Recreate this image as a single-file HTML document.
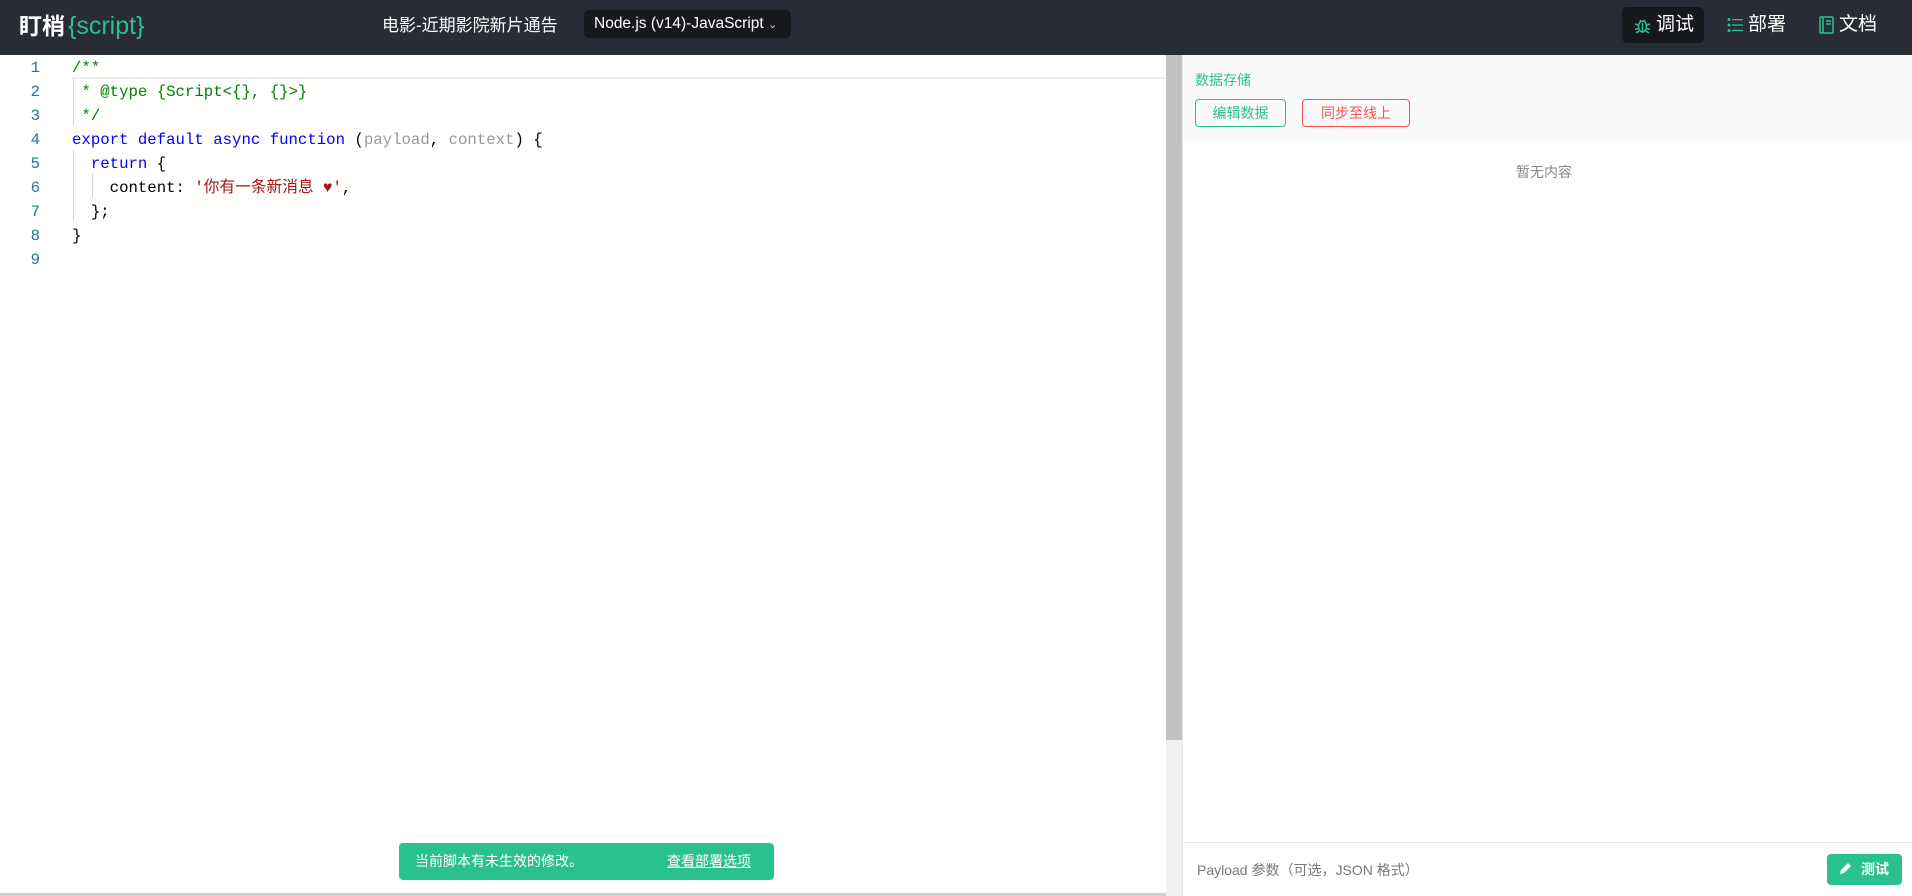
<!DOCTYPE html>
<html><head><meta charset="utf-8"><style>
*{margin:0;padding:0;box-sizing:border-box}
body{width:1912px;height:896px;overflow:hidden;background:#fff;font-family:"Liberation Sans","Noto Sans CJK SC",sans-serif;position:relative}
.hd{position:absolute;left:0;top:0;width:1912px;height:55px;background:#282c34;color:#fff}
.abs{position:absolute;line-height:1.2}
.code{position:absolute;left:0;top:55px;width:1166px;height:838px;background:#fffffe;font-family:"Liberation Mono","Noto Sans CJK SC",monospace;font-size:15.7px}
.ln{position:absolute;left:0;width:40px;text-align:right;color:#237893;line-height:20px;height:20px}
.cl{position:absolute;left:72px;white-space:pre;color:#000;line-height:20px;height:20px}
.g{color:#008000}.k{color:#0000ff}.p{color:#999}.s{color:#a31515}
.btn{position:absolute;border:1px solid;border-radius:4px;font-size:14px;display:flex;align-items:center;justify-content:center}
</style></head><body>
<div class="hd">
 <div class="abs" style="left:19px;top:13px;font-size:23px;font-weight:bold;color:#fff">盯梢</div>
 <div class="abs" style="left:68px;top:11px;font-size:25px;color:#2bc18e">{script}</div>
 <div class="abs" style="left:382px;top:16px;font-size:17px">电影-近期影院新片通告</div>
 <div class="abs" style="left:584px;top:10px;width:207px;height:28px;background:#16181c;border-radius:5px;font-size:15.5px;padding:5px 0 0 10px">Node.js (v14)-JavaScript <span style="font-size:11px;color:#ccc">&#8964;</span></div>
 <div class="abs" style="left:1622px;top:7px;width:82px;height:36px;background:#16181c;border-radius:5px"></div>
 <svg class="abs" style="left:1634px;top:16px" width="17" height="18" viewBox="0 0 17 18" fill="none" stroke="#2bc18e" stroke-width="1.5"><ellipse cx="8.5" cy="10.5" rx="4" ry="5.5"/><path d="M6 4l1 2M11 4l-1 2M1 8l3 1M16 8l-3 1M1 13h3M16 13h-3M2 17l3-2M15 17l-3-2M8.5 7v9"/></svg>
 <div class="abs" style="left:1656px;top:14px;font-size:19px">调试</div>
 <svg class="abs" style="left:1727px;top:17px" width="16" height="16" viewBox="0 0 16 16" fill="#2bc18e"><circle cx="2" cy="2.5" r="1.5"/><circle cx="2" cy="8" r="1.5"/><circle cx="2" cy="13.5" r="1.5"/><rect x="5" y="2" width="11" height="1.3"/><rect x="5" y="7.4" width="11" height="1.3"/><rect x="5" y="12.8" width="11" height="1.3"/></svg>
 <div class="abs" style="left:1748px;top:14px;font-size:19px">部署</div>
 <svg class="abs" style="left:1819px;top:16px" width="15" height="18" viewBox="0 0 15 18" fill="none" stroke="#2bc18e" stroke-width="1.5"><rect x="1" y="1" width="13" height="16" rx="1"/><path d="M4 1v16M7 5h5M7 8h5"/></svg>
 <div class="abs" style="left:1839px;top:14px;font-size:19px">文档</div>
</div>
<div class="code">
 <div class="abs" style="left:72px;top:1px;width:1094px;height:23px;border-bottom:2px solid #eee"></div>
 <div class="abs" style="left:73px;top:24px;width:1px;height:47px;background:#d3d3d3"></div>
 <div class="abs" style="left:73px;top:95px;width:1px;height:71px;background:#d3d3d3"></div>
 <div class="abs" style="left:92px;top:119px;width:1px;height:23px;background:#d3d3d3"></div>
 <div class="ln" style="top:3px">1</div><div class="cl g" style="top:3px">/**</div>
 <div class="ln" style="top:27px">2</div><div class="cl g" style="top:27px"> * @type {Script&lt;{}, {}&gt;}</div>
 <div class="ln" style="top:51px">3</div><div class="cl g" style="top:51px"> */</div>
 <div class="ln" style="top:75px">4</div><div class="cl" style="top:75px"><span class="k">export default async function</span> (<span class="p">payload</span>, <span class="p">context</span>) {</div>
 <div class="ln" style="top:99px">5</div><div class="cl" style="top:99px">  <span class="k">return</span> {</div>
 <div class="ln" style="top:123px">6</div><div class="cl" style="top:123px">    content: <span class="s">'你有一条新消息 ♥'</span>,</div>
 <div class="ln" style="top:147px">7</div><div class="cl" style="top:147px">  };</div>
 <div class="ln" style="top:171px">8</div><div class="cl" style="top:171px">}</div>
 <div class="ln" style="top:195px">9</div>
</div>
<div class="abs" style="left:1166px;top:55px;width:16px;height:685px;background:#c1c1c1"></div>
<div class="abs" style="left:1166px;top:740px;width:16px;height:156px;background:#f1f1f1"></div>
<div class="abs" style="left:0;top:893px;width:1166px;height:3px;background:#d0d0d0"></div>
<div class="abs" style="left:1182px;top:55px;width:1px;height:841px;background:#e5e5e5"></div>
<div class="abs" style="left:1183px;top:55px;width:729px;height:88px;background:#fafafa"></div>
<div class="abs" style="left:1195px;top:72px;font-size:14px;color:#2bc18e">数据存储</div>
<div class="btn" style="left:1195px;top:99px;width:91px;height:28px;border-color:#2bc18e;color:#2bc18e">编辑数据</div>
<div class="btn" style="left:1302px;top:99px;width:108px;height:28px;border-color:#ff4d4f;color:#ff4d4f">同步至线上</div>
<div class="abs" style="left:1516px;top:164px;font-size:14px;color:#888">暂无内容</div>
<div class="abs" style="left:1183px;top:842px;width:729px;height:1px;background:#e8e8e8"></div>
<div class="abs" style="left:1197px;top:862px;font-size:14px;color:#777">Payload 参数（可选，JSON 格式）</div>
<div class="abs" style="left:1827px;top:854px;width:75px;height:31px;background:#2bc18e;border-radius:4px;color:#fff;font-size:14px;font-weight:bold;padding:7px 0 0 34px">测试</div>
<svg class="abs" style="left:1838px;top:862px" width="14" height="14" viewBox="0 0 14 14" fill="#fff"><path d="M2 12l1-4 7-7 3 3-7 7z"/></svg>
<div class="abs" style="left:399px;top:843px;width:375px;height:37px;background:#2bc18e;border-radius:4px;color:#fff;font-size:14px">
 <span class="abs" style="left:16px;top:10px">当前脚本有未生效的修改。</span>
 <span class="abs" style="left:268px;top:10px;text-decoration:underline">查看部署选项</span>
</div>
</body></html>
